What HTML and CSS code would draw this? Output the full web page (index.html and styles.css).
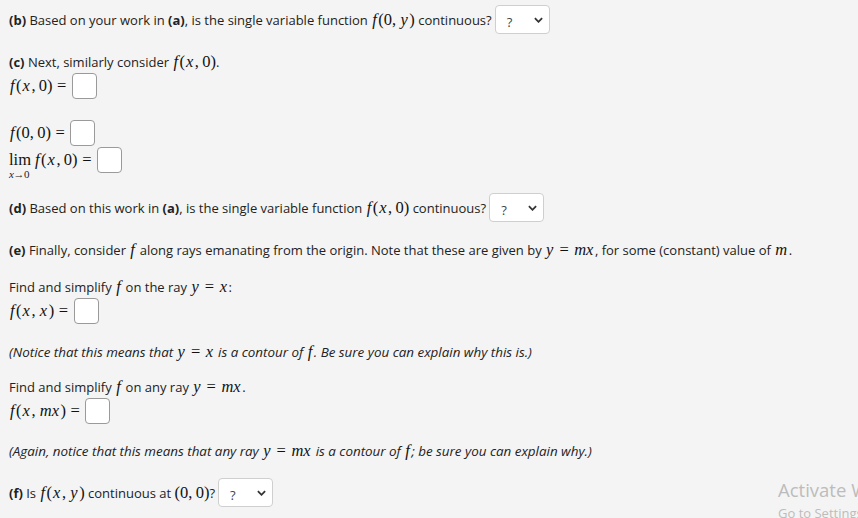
FILE: index.html
```html
<!DOCTYPE html>
<html>
<head>
<meta charset="utf-8">
<link rel="stylesheet" href="styles.css">
</head>
<body>
<div class="page">
  <div class="row row-sel mt5">
    <span><b>(b)</b> Based on your work in <b>(a)</b>, is the single variable function <span class="m"><i>f</i>(0,&thinsp;<i>y</i>)</span> continuous?</span>
    <span class="sel"><span class="q">?</span><svg class="chev" viewBox="0 0 10 6"><path d="M1 1 L5 5 L9 1" /></svg></span>
  </div>
  <div class="row row-txt mt18"><span><b>(c)</b> Next, similarly consider <span class="m"><i>f</i>(<i>x</i>,&thinsp;0)</span>.</span></div>
  <div class="row row-in mt1"><span class="m"><i>f</i>(<i>x</i>,&thinsp;0)<span class="eq">=</span></span><span class="box"></span></div>
  <div class="row row-in mt21"><span class="m"><i>f</i>(0,&thinsp;0)<span class="eq">=</span></span><span class="box"></span></div>
  <div class="row row-in mt1">
    <span class="lim"><span class="m">lim</span><span class="sub"><i>x</i>→0</span></span>
    <span class="m lsp"><i>f</i>(<i>x</i>,&thinsp;0)<span class="eq">=</span></span><span class="box"></span>
  </div>
  <div class="row row-sel mt20">
    <span><b>(d)</b> Based on this work in <b>(a)</b>, is the single variable function <span class="m"><i>f</i>(<i>x</i>,&thinsp;0)</span> continuous?</span>
    <span class="sel"><span class="q">?</span><svg class="chev" viewBox="0 0 10 6"><path d="M1 1 L5 5 L9 1" /></svg></span>
  </div>
  <div class="row row-txt mt18"><span><b>(e)</b> Finally, consider <span class="m"><i>f</i></span> along rays emanating from the origin. Note that these are given by <span class="m"><i>y</i><span class="eq">=</span><i>mx</i></span>, for some (constant) value of <span class="m"><i>m</i></span>.</span></div>
  <div class="row row-txt mt17"><span>Find and simplify <span class="m"><i>f</i></span> on the ray <span class="m"><i>y</i><span class="eq">=</span><i>x</i></span>:</span></div>
  <div class="row row-in mt1"><span class="m"><i>f</i>(<i>x</i>,&thinsp;<i>x</i>)<span class="eq">=</span></span><span class="box"></span></div>
  <div class="row row-txt mt18 it"><span>(Notice that this means that <span class="m"><i>y</i><span class="eq">=</span><i>x</i></span> is a contour of <span class="m"><i>f</i></span>. Be sure you can explain why this is.)</span></div>
  <div class="row row-txt mt15"><span>Find and simplify <span class="m"><i>f</i></span> on any ray <span class="m"><i>y</i><span class="eq">=</span><i>mx</i></span>.</span></div>
  <div class="row row-in mt1"><span class="m"><i>f</i>(<i>x</i>,&thinsp;<i>mx</i>)<span class="eq">=</span></span><span class="box"></span></div>
  <div class="row row-txt mt17 it"><span>(Again, notice that this means that any ray <span class="m"><i>y</i><span class="eq">=</span><i>mx</i></span> is a contour of <span class="m"><i>f</i></span>; be sure you can explain why.)</span></div>
  <div class="row row-sel mt17">
    <span><b>(f)</b> Is <span class="m"><i>f</i>(<i>x</i>,&thinsp;<i>y</i>)</span> continuous at <span class="m">(0,&thinsp;0)</span>?</span>
    <span class="sel"><span class="q">?</span><svg class="chev" viewBox="0 0 10 6"><path d="M1 1 L5 5 L9 1" /></svg></span>
  </div>
</div>
<div class="watermark">
  <div class="wm1">Activate Windows</div>
  <div class="wm2">Go to Settings to activate Windows.</div>
</div>
</body>
</html>
```
FILE: styles.css
```css
html, body {
  margin: 0;
  padding: 0;
  background: #f4f4f4;
  overflow: hidden;
}
body {
  width: 858px;
  height: 518px;
  position: relative;
  font-family: "Open Sans", "Noto Sans", sans-serif;
  font-size: 13px;
  color: #222;
}
.page {
  display: flex;
  flex-direction: column;
  padding-left: 9px;
}
.row {
  display: flex;
  align-items: center;
  white-space: nowrap;
}
.row-txt { height: 20px; }
.row-in { height: 26px; }
.row-sel { height: 29px; }
.mt1 { margin-top: 1px; }
.mt5 { margin-top: 5px; }
.mt15 { margin-top: 15px; }
.mt17 { margin-top: 17px; }
.mt18 { margin-top: 18px; }
.mt20 { margin-top: 20px; }
.mt21 { margin-top: 21px; }
b { font-weight: 700; }
.it { font-style: italic; font-size: 13.4px; }
.m {
  font-family: "Liberation Serif", "DejaVu Serif", serif;
  font-size: 16.5px;
  font-style: normal;
  color: #111;
}
.m i {
  font-style: italic;
  padding-right: 1.5px;
  margin-left: 1px;
}
.eq { margin: 0 4.5px; }
.lsp { margin-left: 3px; }
.box {
  display: inline-block;
  width: 23px;
  height: 24px;
  margin-left: 1px;
  background: #fff;
  border: 1px solid #9a9a9a;
  border-radius: 4px;
}
.sel {
  display: inline-flex;
  align-items: center;
  justify-content: space-between;
  box-sizing: border-box;
  width: 55px;
  height: 29px;
  margin-left: 3px;
  padding: 0 6px 0 11px;
  background: #fff;
  border: 1px solid #cfcfcf;
  border-radius: 4px;
  font-size: 13px;
  color: #444;
}
.q { margin-top: 4px; }
.chev {
  width: 9px;
  height: 6px;
  fill: none;
  stroke: #333;
  stroke-width: 2;
}
.lim {
  position: relative;
  display: inline-block;
}
.sub {
  position: absolute;
  left: 0;
  top: 18px;
  font-family: "Liberation Serif", "DejaVu Serif", serif;
  font-size: 11px;
  letter-spacing: -0.5px;
}
.sub i { font-style: italic; }
.watermark {
  position: absolute;
  left: 778px;
  top: 478px;
  white-space: nowrap;
  color: #bcbcbc;
  font-family: "Open Sans", "Noto Sans", sans-serif;
}
.wm1 { font-size: 18.5px; line-height: 24px; }
.wm2 { font-size: 13px; line-height: 18px; margin-top: 2px; }
```
